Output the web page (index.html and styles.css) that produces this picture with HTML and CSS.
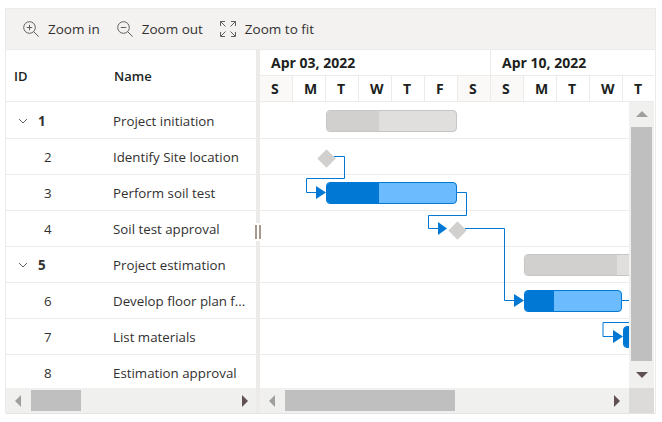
FILE: index.html
```html
<!DOCTYPE html>
<html lang="en">
<head>
<meta charset="utf-8">
<title>Gantt</title>
<link rel="stylesheet" href="styles.css">
</head>
<body>
<div class="gantt">
  <div class="toolbar">
    <div class="tool">
      <svg class="tool-icon" viewBox="0 0 16 16"><circle cx="6.500" cy="6.500" r="5.800" /><path d="M3.800 6.500h5.400M6.500 3.800v5.400M10.700 10.700l5 5" /></svg>
      <span>Zoom in</span>
    </div>
    <div class="tool">
      <svg class="tool-icon" viewBox="0 0 16 16"><circle cx="6.500" cy="6.500" r="5.800" /><path d="M3.800 6.500h5.400M10.700 10.700l5 5" /></svg>
      <span>Zoom out</span>
    </div>
    <div class="tool">
      <svg class="tool-icon" viewBox="0 0 16 16"><path d="M.5 5V.5H5M11 .5h4.500V5M15.500 11v4.500H11M5 15.500H.5V11M1 1l4.500 4.500M15 1l-4.500 4.500M15 15l-4.500-4.500M1 15l4.500-4.500" /></svg>
      <span>Zoom to fit</span>
    </div>
  </div>
  <div class="panes">
    <div class="grid-pane">
      <div class="grid-head"><div class="col-id">ID</div><div class="col-name">Name</div></div>
      <div class="grid-body">
        <div class="row"><div class="col-id parent"><svg class="chev" viewBox="0 0 10 6"><path d="M1 1l4 4 4-4" /></svg><b>1</b></div><div class="col-name">Project initiation</div></div>
        <div class="row"><div class="col-id child">2</div><div class="col-name">Identify Site location</div></div>
        <div class="row"><div class="col-id child">3</div><div class="col-name">Perform soil test</div></div>
        <div class="row"><div class="col-id child">4</div><div class="col-name">Soil test approval</div></div>
        <div class="row"><div class="col-id parent"><svg class="chev" viewBox="0 0 10 6"><path d="M1 1l4 4 4-4" /></svg><b>5</b></div><div class="col-name">Project estimation</div></div>
        <div class="row"><div class="col-id child">6</div><div class="col-name">Develop floor plan f...</div></div>
        <div class="row"><div class="col-id child">7</div><div class="col-name">List materials</div></div>
        <div class="row"><div class="col-id child">8</div><div class="col-name">Estimation approval</div></div>
      </div>
      <div class="hbar hbar-left">
        <span class="arrow-left"></span><span class="thumb thumb-left"></span><span class="arrow-right"></span>
      </div>
    </div>
    <div class="splitter"><span class="grip"></span></div>
    <div class="chart-pane">
      <div class="timeline">
        <div class="weeks"><div class="week">Apr 03, 2022</div><div class="week week-last">Apr 10, 2022</div></div>
        <div class="days">
          <div class="day off">S</div><div class="day">M</div><div class="day">T</div><div class="day">W</div><div class="day">T</div><div class="day">F</div><div class="day off">S</div>
          <div class="day off">S</div><div class="day">M</div><div class="day">T</div><div class="day">W</div><div class="day day-last">T</div>
        </div>
      </div>
      <div class="chart-wrap">
        <div class="chart">
          <div class="chart-row"></div><div class="chart-row"></div><div class="chart-row"></div><div class="chart-row"></div>
          <div class="chart-row"></div><div class="chart-row"></div><div class="chart-row"></div><div class="chart-row"></div>
          <svg class="links" width="369" height="286" viewBox="0 0 369 286">
            <path d="M74 54.500h10.500v22h-38v14h10" />
            <path d="M197 90.500h9.500v23h-38v13h10" />
            <path d="M205 126.500h39.500v72h10" />
            <path d="M362 198.500h7M369 220.500h-26v14h10" />
            <polygon class="tip" points="56,84 66,90.500 56,97" />
            <polygon class="tip" points="178,120 187,126.500 178,133" />
            <polygon class="tip" points="254,192 264,198.500 254,205" />
            <polygon class="tip" points="353,228 363,234.500 353,241" />
          </svg>
          <div class="bar summary bar-a"><span class="fill"></span></div>
          <span class="milestone ms-a"></span>
          <div class="bar task bar-b"><span class="fill"></span></div>
          <span class="milestone ms-b"></span>
          <div class="bar summary bar-c"><span class="fill"></span></div>
          <div class="bar task bar-d"><span class="fill"></span></div>
          <div class="bar task bar-e"><span class="fill"></span></div>
        </div>
        <div class="vbar">
          <span class="arrow-up"></span><span class="thumb thumb-v"></span><span class="arrow-down"></span>
        </div>
      </div>
      <div class="hbar-wrap">
        <div class="hbar hbar-right">
          <span class="arrow-left"></span><span class="thumb thumb-right"></span><span class="arrow-right"></span>
        </div>
        <div class="corner"></div>
      </div>
    </div>
  </div>
</div>
</body>
</html>
```
FILE: styles.css
```css
* { box-sizing: border-box; }
html, body { margin: 0; padding: 0; background: #fff; }
body { padding: 8px 6px 8px 5px; font-family: "Open Sans", "Liberation Sans", sans-serif; font-size: 13.300px; color: #323130; width: 662px; height: 422px; overflow: hidden; }
.gantt { width: 651px; height: 406px; border: 1px solid #edebe9; border-bottom-color: #e4e4e4; display: flex; flex-direction: column; }
.toolbar { height: 41px; background: #f3f2f1; display: flex; align-items: center; padding: 0 0 0 17px; border-bottom: 1px solid #edebe9; flex: none; font-size: 13.500px; }
.tool { display: flex; align-items: center; margin-right: 17px; gap: 9px; }
.tool-icon { width: 16px; height: 16px; fill: none; stroke: #605e5c; stroke-width: 1; }
.panes { display: flex; flex: 1; min-height: 0; }
.grid-pane { width: 250px; display: flex; flex-direction: column; flex: none; }
.grid-head { height: 52px; display: flex; align-items: center; border-bottom: 1px solid #edebe9; font-weight: 600; font-size: 13px; color: #201f1e; flex: none; }
.grid-head .col-id { padding-left: 8px; }
.grid-head .col-name { padding-left: 8px; }
.col-id { width: 100px; flex: none; }
.col-name { padding-left: 7px; white-space: nowrap; }
.grid-body { flex: 1; overflow: hidden; min-height: 0; padding-top: 1px; }
.row { height: 36px; display: flex; align-items: center; border-bottom: 1px solid #edebe9; }
.row .col-id { padding-left: 38px; }
.row .parent { padding-left: 12px; display: flex; align-items: center; }
.chev { width: 10px; height: 6px; fill: none; stroke: #605e5c; stroke-width: 1; margin-right: 10px; margin-top: 1px; }
.splitter { width: 4px; background: #edebe9; position: relative; flex: none; }
.grip { position: absolute; left: 0; top: 173px; width: 4px; height: 18px; background: #fff; }
.grip::after { content: ""; position: absolute; left: -1px; top: 2px; width: 2px; height: 14px; border-left: 2px solid #a8998f; border-right: 2px solid #a8998f; }
.chart-pane { flex: 1; display: flex; flex-direction: column; min-width: 0; }
.timeline { width: 394px; flex: none; font-weight: 700; font-size: 14px; color: #201f1e; }
.weeks { height: 26px; display: flex; border-bottom: 1px solid #edebe9; }
.week { width: 231px; padding-left: 11px; border-right: 1px solid #edebe9; line-height: 26px; }
.week-last { width: 163px; border-right: 0; }
.days { height: 26px; display: flex; border-bottom: 1px solid #edebe9; }
.day { width: 33px; padding-left: 11px; border-right: 1px solid #edebe9; line-height: 26px; }
.day.off { background: #faf9f8; }
.day-last { width: 31px; border-right: 0; }
.chart-wrap { flex: 1; min-height: 0; display: flex; }
.chart { width: 369px; height: 286px; position: relative; overflow: hidden; flex: none; padding-top: 1px; }
.chart-row { height: 36px; border-bottom: 1px solid #edebe9; }
.links { position: absolute; left: 0; top: 0; fill: none; stroke: #0078d4; stroke-width: 1; }
.links .tip { fill: #0078d4; stroke: none; }
.bar { position: absolute; height: 22px; border-radius: 4px; overflow: hidden; border: 1px solid; }
.fill { display: block; height: 100%; }
.summary { background: #e1dfdd; border-color: #c8c6c4; }
.summary .fill { background: #d2d0ce; }
.task { background: #6cbbff; border-color: #0078d4; }
.task .fill { background: #0078d4; }
.bar-a { left: 66px; top: 8px; width: 131px; }
.bar-a .fill { width: 52px; }
.bar-b { left: 66px; top: 80px; width: 131px; }
.bar-b .fill { width: 52px; }
.bar-c { left: 264px; top: 152px; width: 130px; }
.bar-c .fill { width: 92px; }
.bar-d { left: 264px; top: 188px; width: 98px; }
.bar-d .fill { width: 29px; }
.bar-e { left: 363px; top: 224px; width: 60px; }
.bar-e .fill { width: 40px; }
.milestone { position: absolute; width: 13px; height: 13px; background: #d2d0ce; transform: rotate(45deg); }
.ms-a { left: 59.500px; top: 49.500px; }
.ms-b { left: 190.500px; top: 121.500px; }
.vbar { width: 25px; background: #f0f0ef; position: relative; flex: none; }
.thumb { background: #c0bfbf; position: absolute; display: block; }
.thumb-v { left: 2px; top: 25px; width: 21px; height: 234px; }
.arrow-up, .arrow-down { position: absolute; left: 7px; width: 0; height: 0; border-left: 6px solid transparent; border-right: 6px solid transparent; }
.arrow-up { top: 9px; border-bottom: 6px solid #a19f9d; }
.arrow-down { top: 270px; border-top: 6px solid #605054; }
.hbar { height: 25px; background: #f0f0ef; position: relative; flex: none; }
.arrow-left, .arrow-right { position: absolute; top: 7px; width: 0; height: 0; border-top: 6px solid transparent; border-bottom: 6px solid transparent; }
.arrow-left { border-right: 6px solid #a19f9d; }
.arrow-right { border-left: 6px solid #605054; }
.hbar-left .arrow-left { left: 9px; }
.hbar-left .arrow-right { left: 236px; }
.thumb-left { left: 25px; top: 2px; width: 50px; height: 21px; }
.hbar-wrap { display: flex; height: 25px; flex: none; }
.hbar-right { width: 369px; }
.hbar-right .arrow-left { left: 9px; }
.hbar-right .arrow-right { left: 354px; }
.thumb-right { left: 25px; top: 2px; width: 170px; height: 21px; }
.corner { width: 25px; background: #dcdbda; }
```
